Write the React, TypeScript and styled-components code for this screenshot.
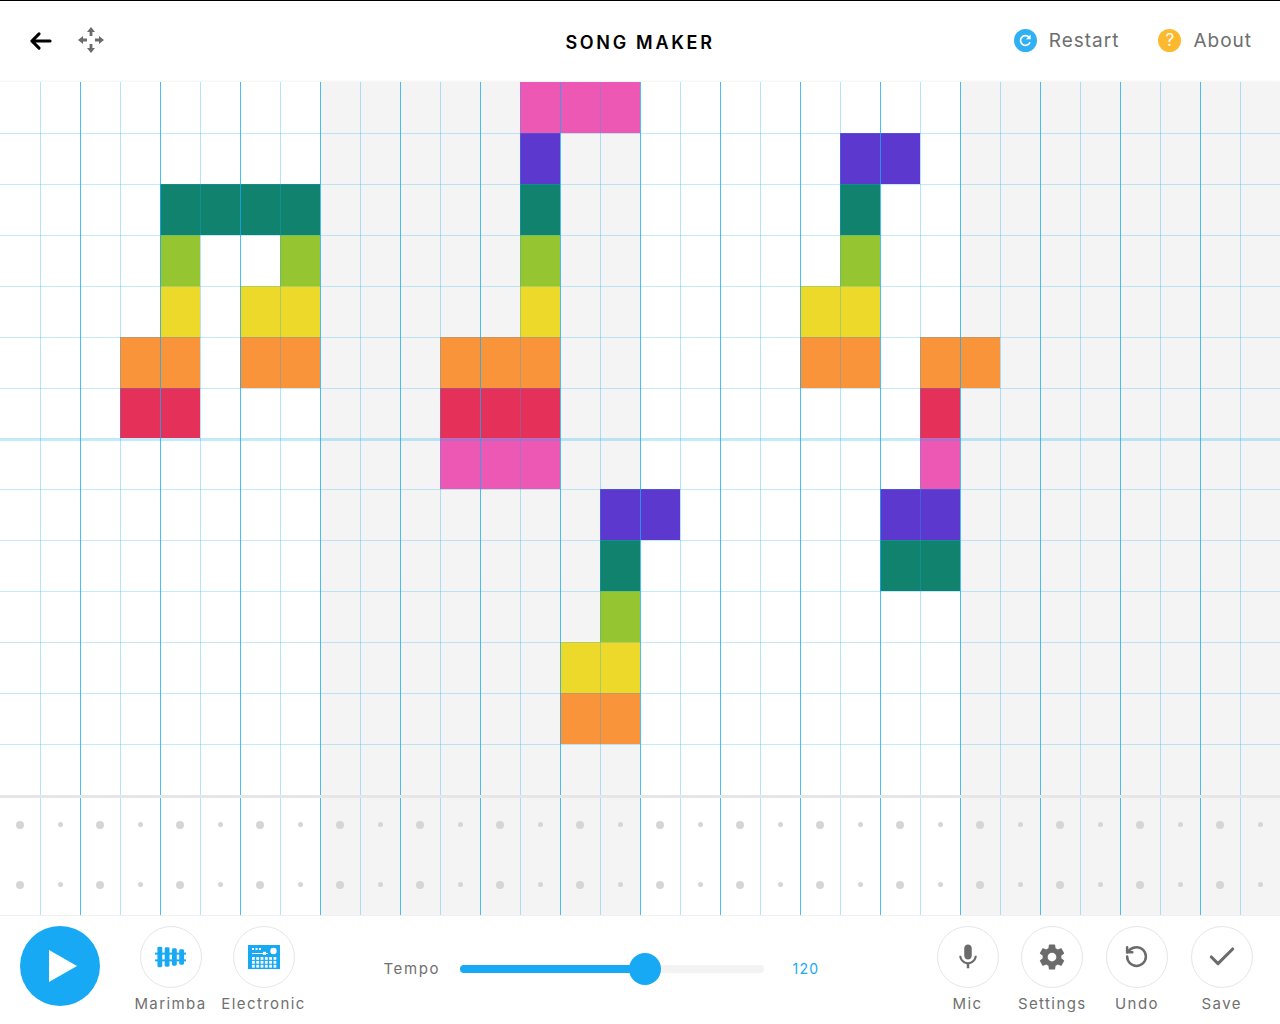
import styled, { createGlobalStyle, css } from 'styled-components'
import { Check, RotateCcw } from 'lucide-react'

const COLORS = {
  p: '#ec58b3',
  v: '#5d38ce',
  t: '#11826d',
  g: '#95c631',
  y: '#edd929',
  o: '#f9943b',
  r: '#e5305a',
} as const

type NoteKey = keyof typeof COLORS

// each row: colour + the columns that are on
const NOTES: [NoteKey, number[]][] = [
  ['p', [13, 14, 15]],
  ['v', [13, 21, 22]],
  ['t', [4, 5, 6, 7, 13, 21]],
  ['g', [4, 7, 13, 21]],
  ['y', [4, 6, 7, 13, 20, 21]],
  ['o', [3, 4, 6, 7, 11, 12, 13, 20, 21, 23, 24]],
  ['r', [3, 4, 11, 12, 13, 23]],
  ['p', [11, 12, 13, 23]],
  ['v', [15, 16, 22, 23]],
  ['t', [15, 22, 23]],
  ['g', [15]],
  ['y', [14, 15]],
  ['o', [14, 15]],
  ['t', []],
]

const columns = Array.from({ length: 32 }, (_, i) => i)

const App = () => {
  return (
    <Page>
      <GlobalStyle />
      <Header>
        <HeaderLeft>
          <BackIcon viewBox="0 0 24 20">
            <path d="M22 10H3M10.5 2.5 3 10l7.5 7.5" />
          </BackIcon>
          <MoveIcon viewBox="0 0 26 26">
            <path d="M13 0l4 5h-2.6v4h-2.8V5H9zM13 26l-4-5h2.6v-4h2.8v4H17zM0 13l5-4v2.6h4v2.8H5V17zM26 13l-5 4v-2.6h-4v-2.8h4V9z" />
          </MoveIcon>
        </HeaderLeft>
        <Title>SONG MAKER</Title>
        <HeaderRight>
          <HeaderLink>
            <Badge $bg="#2fb0f4">
              <svg width="15" height="15" viewBox="0 0 15 15" fill="none">
                <path d="M12 9.2A4.9 4.9 0 1 1 11 4.1" stroke="#fff" strokeWidth="1.7" />
                <path d="M12.6 1.6v4.6H8z" fill="#fff" />
              </svg>
            </Badge>
            Restart
          </HeaderLink>
          <HeaderLink>
            <Badge $bg="#fdb92e">?</Badge>
            About
          </HeaderLink>
        </HeaderRight>
      </Header>

      <MelodyGrid>
        {NOTES.map(([key, cols], row) =>
          columns.map((col) => (
            <Cell
              key={`${row}-${col}`}
              $col={col}
              $row={row}
              $color={cols.includes(col) ? COLORS[key] : undefined}
            />
          )),
        )}
      </MelodyGrid>

      <PercussionGrid>
        {[0, 1].map((row) =>
          columns.map((col) => (
            <PercCell key={`${row}-${col}`} $col={col}>
              <Dot $big={col % 2 === 0} />
            </PercCell>
          )),
        )}
      </PercussionGrid>

      <Footer>
        <PlayButton>
          <svg width="28" height="32" viewBox="0 0 28 32">
            <path d="M0 0l28 16L0 32z" fill="#fff" />
          </svg>
        </PlayButton>
        <InstrumentGroup>
          <Tool>
            <RoundButton>
              <svg width="31" height="22" viewBox="0 0 32 22" fill="#18a9f5">
                <rect x="0" y="6.5" width="32" height="2" />
                <rect x="0" y="13.5" width="32" height="2" />
                <rect x="2.5" y="0.5" width="5" height="21" rx="1.5" />
                <rect x="10" y="1" width="5" height="20" rx="1.5" />
                <rect x="17.5" y="2" width="5" height="18" rx="1.5" />
                <rect x="25" y="3" width="5" height="16" rx="1.5" />
              </svg>
            </RoundButton>
            <ToolLabel>Marimba</ToolLabel>
          </Tool>
          <Tool>
            <RoundButton>
              <svg width="32" height="24" viewBox="0 0 32 24">
                <rect width="32" height="24" fill="#18a9f5" />
                <g fill="#fff">
                  <rect x="4" y="3" width="2" height="2" />
                  <rect x="7.5" y="3" width="2" height="2" />
                  <rect x="11" y="3" width="2" height="2" />
                  <circle cx="25.5" cy="6" r="3.2" />
                  <rect x="4" y="8" width="16" height="1" />
                  <rect x="15" y="6.8" width="3" height="3" />
                  {[0, 1, 2].map((r) =>
                    [0, 1, 2, 3, 4, 5].map((c) => (
                      <rect key={`${r}${c}`} x={4 + c * 4.3} y={12 + r * 3.9} width="2.8" height="2.8" />
                    )),
                  )}
                </g>
              </svg>
            </RoundButton>
            <ToolLabel>Electronic</ToolLabel>
          </Tool>
        </InstrumentGroup>

        <TempoGroup>
          <TempoLabel>Tempo</TempoLabel>
          <Track>
            <TrackFill />
            <Thumb />
          </Track>
          <TempoValue>120</TempoValue>
        </TempoGroup>

        <ActionGroup>
          <ActionTool>
            <RoundButton>
              <GreyIcon width="30" height="30" viewBox="0 0 24 24">
                <path d="M12 14c1.66 0 2.99-1.34 2.99-3L15 5c0-1.66-1.34-3-3-3S9 3.34 9 5v6c0 1.66 1.34 3 3 3zm5.3-3c0 3-2.54 5.1-5.3 5.1S6.7 14 6.7 11H5c0 3.41 2.72 6.23 6 6.72V21h2v-3.28c3.28-.48 6-3.3 6-6.72h-1.7z" />
              </GreyIcon>
            </RoundButton>
            <ToolLabel>Mic</ToolLabel>
          </ActionTool>
          <ActionTool>
            <RoundButton>
              <GreyIcon width="30" height="30" viewBox="0 0 24 24">
                <path d="M19.43 12.98c.04-.32.07-.64.07-.98s-.03-.66-.07-.98l2.11-1.65c.19-.15.24-.42.12-.64l-2-3.46c-.12-.22-.39-.3-.61-.22l-2.49 1c-.52-.4-1.08-.73-1.69-.98l-.38-2.65C14.46 2.18 14.25 2 14 2h-4c-.25 0-.46.18-.49.42l-.38 2.65c-.61.25-1.17.59-1.69.98l-2.49-1c-.23-.09-.49 0-.61.22l-2 3.46c-.13.22-.07.49.12.64l2.11 1.65c-.04.32-.07.65-.07.98s.03.66.07.98l-2.11 1.65c-.19.15-.24.42-.12.64l2 3.46c.12.22.39.3.61.22l2.49-1c.52.4 1.08.73 1.69.98l.38 2.65c.03.24.24.42.49.42h4c.25 0 .46-.18.49-.42l.38-2.65c.61-.25 1.17-.59 1.69-.98l2.49 1c.23.09.49 0 .61-.22l2-3.46c.12-.22.07-.49-.12-.64l-2.11-1.65zM12 15.5c-1.93 0-3.5-1.57-3.5-3.5s1.57-3.5 3.5-3.5 3.5 1.57 3.5 3.5-1.57 3.5-3.5 3.5z" />
              </GreyIcon>
            </RoundButton>
            <ToolLabel>Settings</ToolLabel>
          </ActionTool>
          <ActionTool>
            <RoundButton>
              <RotateCcw size={25} color="#6b6b6b" strokeWidth={2.4} />
            </RoundButton>
            <ToolLabel>Undo</ToolLabel>
          </ActionTool>
          <ActionTool>
            <RoundButton>
              <Check size={32} color="#6b6b6b" strokeWidth={2.3} />
            </RoundButton>
            <ToolLabel>Save</ToolLabel>
          </ActionTool>
        </ActionGroup>
      </Footer>
    </Page>
  )
}

export default App

const GlobalStyle = createGlobalStyle`
html, body {
    margin: 0;
    padding: 0;
    background: #fff;
}
body {
    font-family: Inter, "Open Sans", sans-serif;
}
`

const Page = styled.div`
width: 1280px;
height: 1024px;
overflow: hidden;
display: flex;
flex-direction: column;
`

const Header = styled.div`
height: 81px;
border-top: 1px solid #000;
display: grid;
grid-template-columns: 1fr auto 1fr;
align-items: center;
box-sizing: content-box;
`

const HeaderLeft = styled.div`
display: flex;
align-items: center;
padding-left: 29px;
gap: 26px;
margin-top: -3px;
`

const BackIcon = styled.svg`
width: 23px;
height: 20px;
fill: none;
stroke: #000;
stroke-width: 3.2;
stroke-linecap: round;
stroke-linejoin: round;
margin-top: 1px;
`

const MoveIcon = styled.svg`
width: 26px;
height: 26px;
fill: #6b6b6b;
`

const Title = styled.h1`
margin: 0 0 -2px;
font-size: 18px;
font-weight: 600;
letter-spacing: 2.7px;
color: #000;
`

const HeaderRight = styled.div`
display: flex;
justify-content: flex-end;
align-items: center;
gap: 39px;
padding-right: 28px;
margin-top: -3px;
`

const HeaderLink = styled.div`
display: flex;
align-items: center;
gap: 12px;
font-size: 19px;
letter-spacing: 1px;
color: #6e6e6e;
`

const Badge = styled.span<{ $bg: string }>`
width: 23px;
height: 23px;
border-radius: 50%;
background: ${({ $bg }) => $bg};
color: #fff;
font-size: 17px;
letter-spacing: 0;
display: flex;
align-items: center;
justify-content: center;
`

const shaded = (col: number) => Math.floor(col / 8) % 2 === 1

const verticalLine = css<{ $col: number }>`
&::before {
    content: '';
    position: absolute;
    top: 0;
    bottom: 0;
    left: 0;
    width: 1px;
    background: ${({ $col }) =>
      $col === 0 ? 'transparent' : $col % 2 === 0 ? 'rgba(24, 169, 245, 0.78)' : 'rgba(24, 169, 245, 0.32)'};
}
`

const MelodyGrid = styled.div`
display: grid;
grid-template-columns: repeat(32, 40px);
grid-template-rows: repeat(14, 50.93px);
box-shadow: 0 -1px 2px rgba(0, 0, 0, 0.05);
`

const Cell = styled.div<{ $col: number; $row: number; $color?: string }>`
position: relative;
background: ${({ $color, $col }) => $color ?? (shaded($col) ? '#f4f4f4' : '#fff')};
${verticalLine}
&::after {
    content: '';
    position: absolute;
    left: 0;
    right: 0;
    top: 0;
    height: ${({ $row }) => ($row === 0 ? '0' : $row === 7 ? '3px' : '1px')};
    background: rgba(24, 169, 245, 0.26);
    z-index: 1;
}
`

const PercussionGrid = styled.div`
position: relative;
display: grid;
grid-template-columns: repeat(32, 40px);
grid-template-rows: repeat(2, 60px);
&::before {
    content: '';
    position: absolute;
    top: 0;
    left: 0;
    right: 0;
    height: 3px;
    background: #e6e6e6;
    z-index: 1;
}
`

const PercCell = styled.div<{ $col: number }>`
position: relative;
background: ${({ $col }) => (shaded($col) ? '#f4f4f4' : '#fff')};
display: flex;
align-items: center;
justify-content: center;
${verticalLine}
`

const Dot = styled.span<{ $big: boolean }>`
width: ${({ $big }) => ($big ? '8px' : '5px')};
height: ${({ $big }) => ($big ? '8px' : '5px')};
border-radius: 50%;
background: #d5d5d5;
`

const Footer = styled.div`
height: 109px;
border-top: 1px solid #f0f0f0;
box-sizing: border-box;
display: flex;
align-items: flex-start;
padding: 10px 16px 0 20px;
`

const PlayButton = styled.div`
width: 80px;
height: 80px;
border-radius: 50%;
background: #18a9f5;
display: flex;
align-items: center;
justify-content: center;
padding-left: 6px;
box-sizing: border-box;
`

const InstrumentGroup = styled.div`
display: flex;
margin-left: 24px;
`

const Tool = styled.div`
width: 93px;
display: flex;
flex-direction: column;
align-items: center;
gap: 6px;
`

const ActionTool = styled(Tool)`
width: 84.7px;
`

const RoundButton = styled.div`
width: 62px;
height: 62px;
border-radius: 50%;
border: 1px solid #e6e6e6;
box-sizing: border-box;
display: flex;
align-items: center;
justify-content: center;
`

const ToolLabel = styled.span`
font-size: 15px;
letter-spacing: 1.4px;
color: #707070;
white-space: nowrap;
`

const GreyIcon = styled.svg`
fill: #6b6b6b;
`

const TempoGroup = styled.div`
display: flex;
align-items: center;
height: 32px;
margin-left: 73.5px;
margin-top: 27px;
`

const TempoLabel = styled.span`
width: 76px;
font-size: 15px;
letter-spacing: 1.6px;
color: #707070;
`

const Track = styled.div`
position: relative;
width: 304px;
height: 8px;
border-radius: 4px;
background: #f3f3f3;
`

const TrackFill = styled.div`
width: 185px;
height: 8px;
border-radius: 4px;
background: #18a9f5;
`

const Thumb = styled.div`
position: absolute;
left: 169px;
top: -12px;
width: 32px;
height: 32px;
border-radius: 50%;
background: #18a9f5;
`

const TempoValue = styled.span`
margin-left: 29px;
font-size: 14px;
letter-spacing: 1.2px;
color: #18a9f5;
`

const ActionGroup = styled.div`
display: flex;
margin-left: auto;
`
